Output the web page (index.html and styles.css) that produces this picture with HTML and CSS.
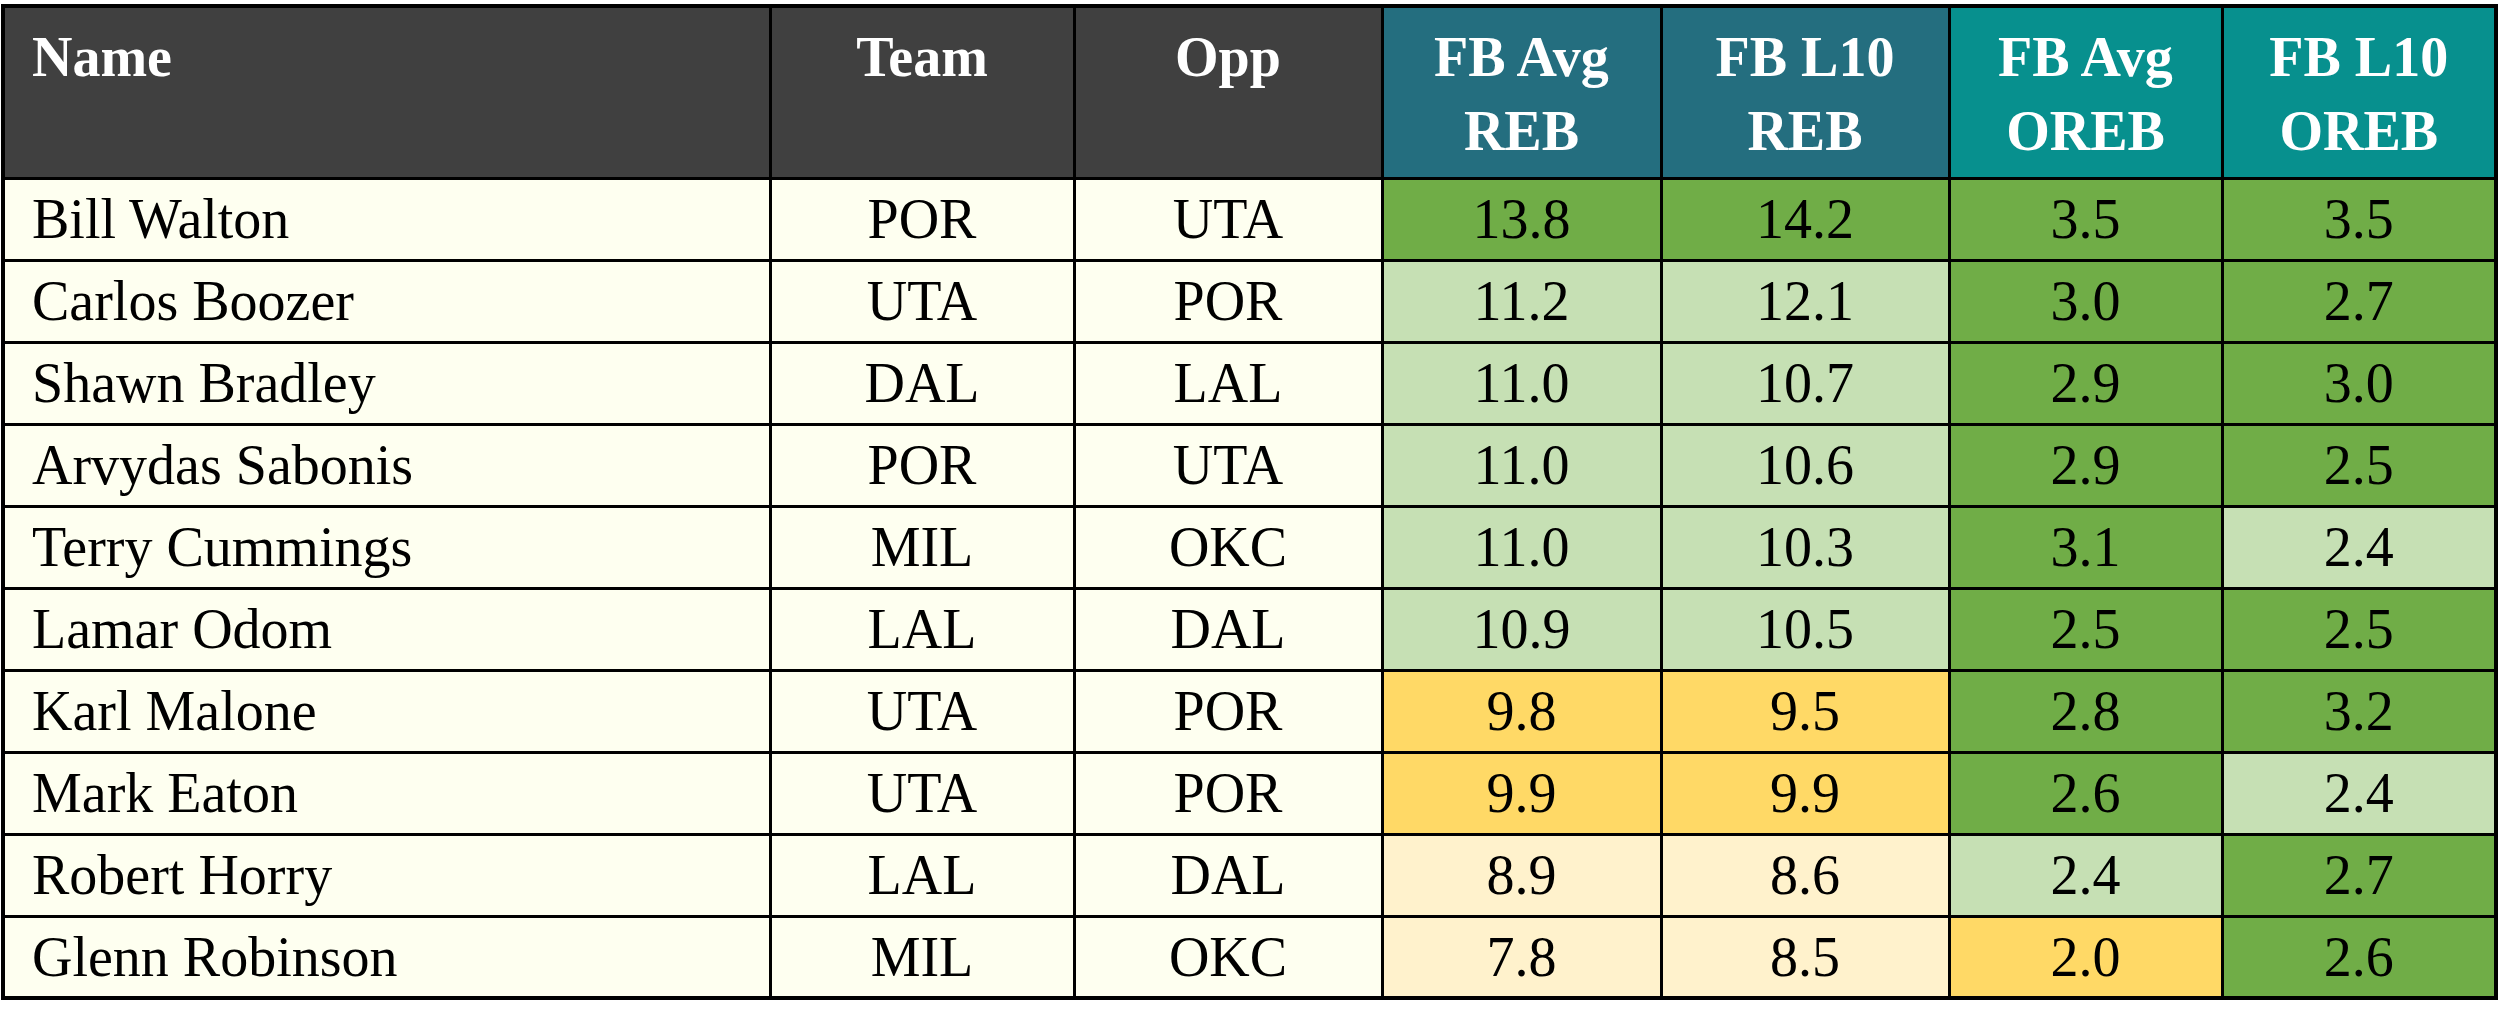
FILE: index.html
```html
<!DOCTYPE html>
<html lang="en">
<head>
<meta charset="utf-8">
<title>Rebounds</title>
<link rel="stylesheet" href="styles.css">
</head>
<body>
<table class="stats">
  <colgroup>
    <col class="c-name">
    <col class="c-team">
    <col class="c-opp">
    <col class="c-s1">
    <col class="c-s2">
    <col class="c-s3">
    <col class="c-s4">
  </colgroup>
  <thead>
    <tr class="head-row">
      <th class="h-dark h-name">Name</th>
      <th class="h-dark">Team</th>
      <th class="h-dark">Opp</th>
      <th class="h-blue">FB Avg<br>REB</th>
      <th class="h-blue">FB L10<br>REB</th>
      <th class="h-teal">FB Avg<br>OREB</th>
      <th class="h-teal">FB L10<br>OREB</th>
    </tr>
  </thead>
  <tbody>
    <tr><td class="name">Bill Walton</td><td>POR</td><td>UTA</td><td class="g">13.8</td><td class="g">14.2</td><td class="g">3.5</td><td class="g">3.5</td></tr>
    <tr><td class="name">Carlos Boozer</td><td>UTA</td><td>POR</td><td class="lg">11.2</td><td class="lg">12.1</td><td class="g">3.0</td><td class="g">2.7</td></tr>
    <tr><td class="name">Shawn Bradley</td><td>DAL</td><td>LAL</td><td class="lg">11.0</td><td class="lg">10.7</td><td class="g">2.9</td><td class="g">3.0</td></tr>
    <tr><td class="name">Arvydas Sabonis</td><td>POR</td><td>UTA</td><td class="lg">11.0</td><td class="lg">10.6</td><td class="g">2.9</td><td class="g">2.5</td></tr>
    <tr><td class="name">Terry Cummings</td><td>MIL</td><td>OKC</td><td class="lg">11.0</td><td class="lg">10.3</td><td class="g">3.1</td><td class="lg">2.4</td></tr>
    <tr><td class="name">Lamar Odom</td><td>LAL</td><td>DAL</td><td class="lg">10.9</td><td class="lg">10.5</td><td class="g">2.5</td><td class="g">2.5</td></tr>
    <tr><td class="name">Karl Malone</td><td>UTA</td><td>POR</td><td class="y">9.8</td><td class="y">9.5</td><td class="g">2.8</td><td class="g">3.2</td></tr>
    <tr><td class="name">Mark Eaton</td><td>UTA</td><td>POR</td><td class="y">9.9</td><td class="y">9.9</td><td class="g">2.6</td><td class="lg">2.4</td></tr>
    <tr><td class="name">Robert Horry</td><td>LAL</td><td>DAL</td><td class="ly">8.9</td><td class="ly">8.6</td><td class="lg">2.4</td><td class="g">2.7</td></tr>
    <tr><td class="name">Glenn Robinson</td><td>MIL</td><td>OKC</td><td class="ly">7.8</td><td class="ly">8.5</td><td class="y">2.0</td><td class="g">2.6</td></tr>
  </tbody>
</table>
</body>
</html>
```

FILE: styles.css
```css
html, body {
  margin: 0;
  padding: 0;
  background: #ffffff;
}

body {
  font-family: "Liberation Serif", "Times New Roman", serif;
}

.stats {
  margin: 4px 0 0 1px;
  border-collapse: collapse;
  table-layout: fixed;
  width: 2496px;
  border: 4px solid #000;
  font-size: 56px;
  line-height: 74px;
  color: #000;
}

.c-name { width: 767px; }
.c-team { width: 304px; }
.c-opp { width: 308px; }
.c-s1 { width: 279px; }
.c-s2 { width: 288px; }
.c-s3 { width: 273px; }
.c-s4 { width: 274px; }

.stats th,
.stats td {
  border: 3px solid #000;
  padding: 0;
  text-align: center;
  white-space: nowrap;
}

.head-row {
  height: 172px;
}

.stats th {
  vertical-align: top;
  padding-top: 12px;
  font-weight: bold;
  color: #ffffff;
}

.h-dark { background: #404040; }
.h-blue { background: #246e7f; }
.h-teal { background: #07908e; }

.stats th.h-name {
  text-align: left;
  padding-left: 27px;
}

.stats tbody tr {
  height: 82px;
}

.stats td {
  vertical-align: middle;
  background: #fefff0;
}

.stats td.name {
  text-align: left;
  padding-left: 27px;
}

.stats td.g { background: #70ad47; }
.stats td.lg { background: #c6e0b4; }
.stats td.y { background: #ffd966; }
.stats td.ly { background: #fff2cc; }
```
